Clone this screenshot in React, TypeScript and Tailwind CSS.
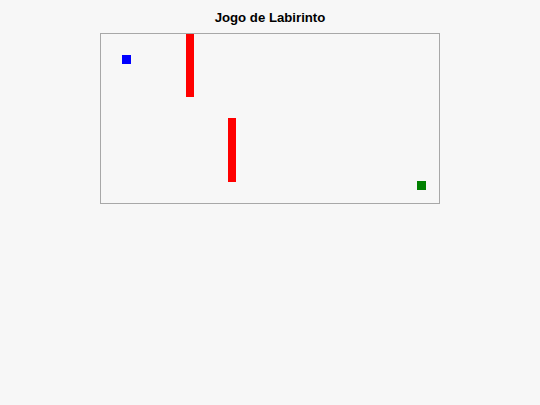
export default function App() {
  return (
    <div className="min-h-[405px] w-full bg-[#f7f7f7] flex flex-col items-center" style={{ fontFamily: '"Liberation Sans", Arial, sans-serif' }}>
      <h1 className="pt-[10px] mb-[7px] text-[13.2px] leading-[16px] font-bold text-black">Jogo de Labirinto</h1>
      <div className="relative w-[340px] h-[171px] border border-[#a8a8a8]">
        <div className="absolute left-[21px] top-[21px] w-[9px] h-[9px] bg-[#0000ff]" />
        <div className="absolute left-[85px] top-0 w-[8px] h-[63px] bg-[#ff0000]" />
        <div className="absolute left-[127px] top-[84px] w-[8px] h-[64px] bg-[#ff0000]" />
        <div className="absolute left-[316px] top-[147px] w-[9px] h-[9px] bg-[#008000]" />
      </div>
    </div>
  );
}
